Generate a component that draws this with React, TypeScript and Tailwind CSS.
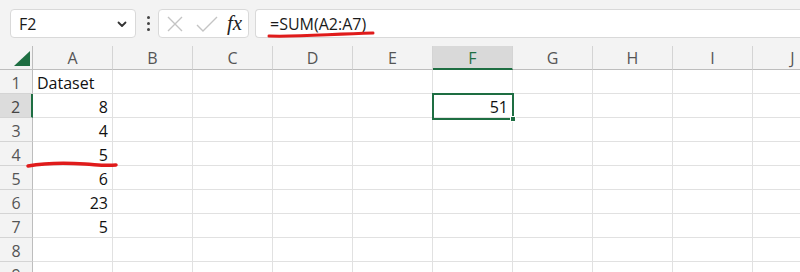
import React from "react";

const cols = ["A", "B", "C", "D", "E", "F", "G", "H", "I", "J"];
const rows = [1, 2, 3, 4, 5, 6, 7, 8, 9];

const data: Record<string, string> = {
  A1: "Dataset",
  A2: "8",
  A3: "4",
  A4: "5",
  A5: "6",
  A6: "23",
  A7: "5",
  F2: "51",
};

function NameBox() {
  return (
    <div className="ml-[10px] flex h-[29px] w-[126px] items-center justify-between rounded-[4px] border border-[#d9d9d9] bg-white pl-[8px] pr-[7px] text-[16px] text-[#1a1a1a]">
      <span>F2</span>
      <svg width="12" height="12" viewBox="0 0 12 12" fill="none" stroke="#333" strokeWidth="1.8" strokeLinecap="round" strokeLinejoin="round">
        <path d="M2.5 4.5 6 8l3.5-3.5" />
      </svg>
    </div>
  );
}

function FormulaButtons() {
  return (
    <div className="ml-[8px] flex h-[29px] w-[91px] items-center rounded-[4px] border border-[#d9d9d9] bg-white pl-[7px]">
      <svg width="18" height="18" viewBox="0 0 18 18" fill="none" stroke="#c4c4c4" strokeWidth="1.4">
        <path d="M2 2l14 14M16 2 2 16" />
      </svg>
      <svg className="ml-[12px]" width="22" height="18" viewBox="0 0 22 18" fill="none" stroke="#c4c4c4" strokeWidth="1.4">
        <path d="M1 10l6 6L21 2" />
      </svg>
      <span className="ml-[9px] font-['Liberation_Serif',serif] text-[21px] italic leading-none text-[#222]">fx</span>
    </div>
  );
}

export default function App() {
  return (
    <div className="relative h-[272px] w-[800px] overflow-hidden bg-white font-['Open_Sans',sans-serif]">
      <div className="flex h-[46px] items-start bg-[#f3f3f3] pt-[9px]">
        <NameBox />
        <div className="ml-[10px] flex h-[29px] w-[4px] flex-col items-center justify-center gap-[3px]">
          <span className="h-[3px] w-[3px] rounded-full bg-[#444]" />
          <span className="h-[3px] w-[3px] rounded-full bg-[#444]" />
          <span className="h-[3px] w-[3px] rounded-full bg-[#444]" />
        </div>
        <FormulaButtons />
        <div className="ml-[6px] flex h-[29px] flex-1 items-center rounded-l-[4px] border border-r-0 border-[#d9d9d9] bg-white pl-[14px] text-[16px] text-[#1a1a1a]">
          =SUM(A2:A7)
        </div>
      </div>

      <div className="grid grid-cols-[33px_repeat(10,80px)] grid-rows-[24px_repeat(9,24px)] text-[16px]">
        <div className="relative border-b border-r border-[#bdbdbd] bg-[#f3f3f3]">
          <svg className="absolute left-[14px] top-[5px]" width="16" height="15" viewBox="0 0 16 15">
            <path d="M16 0V15H0Z" fill="#1e6e42" />
          </svg>
        </div>
        {cols.map((c) => (
          <div
            key={c}
            className={
              c === "F"
                ? "flex items-center justify-center border-b-2 border-r border-b-[#1e6e42] border-r-[#d4d4d4] bg-[#d9d9d9] pt-[2px] text-[#1e6e42]"
                : "flex items-center justify-center border-b border-r border-b-[#bdbdbd] border-r-[#d4d4d4] bg-[#f3f3f3] text-[#555]"
            }
          >
            {c}
          </div>
        ))}
        {rows.map((r) => (
          <React.Fragment key={r}>
            <div
              className={
                r === 2
                  ? "flex items-center justify-center border-b border-r-2 border-b-[#d4d4d4] border-r-[#1e6e42] bg-[#dcdcdc] pt-[2px] text-[#444]"
                  : "flex items-center justify-center border-b border-r border-b-[#d4d4d4] border-r-[#bdbdbd] bg-[#f3f3f3] pt-[2px] text-[#555]"
              }
            >
              {r}
            </div>
            {cols.map((c) => {
              const v = data[c + r];
              const isText = v !== undefined && isNaN(Number(v));
              return (
                <div
                  key={c + r}
                  className={
                    "flex items-center border-b border-r border-[#e1e1e1] px-[4px] pt-[2px] text-[#111] " +
                    (isText ? "justify-start" : "justify-end")
                  }
                >
                  {v}
                </div>
              );
            })}
          </React.Fragment>
        ))}
      </div>

      {/* selected cell F2 */}
      <div className="pointer-events-none absolute left-[432px] top-[93px] h-[27px] w-[82px] border-2 border-[#1e6e42]">
        <span className="absolute -bottom-[4px] -right-[4px] h-[6px] w-[6px] border border-white bg-[#1e6e42]" />
      </div>

      {/* red annotations */}
      <svg className="pointer-events-none absolute left-0 top-0" width="800" height="272" viewBox="0 0 800 272" fill="none" stroke="#e01b1b" strokeLinecap="round">
        <path d="M269 36 C 300 37, 330 34, 373 33" strokeWidth="3" />
        <path d="M28 166 C 45 163, 70 163, 85 164 S 105 166, 116 165" strokeWidth="3.5" />
      </svg>
    </div>
  );
}
